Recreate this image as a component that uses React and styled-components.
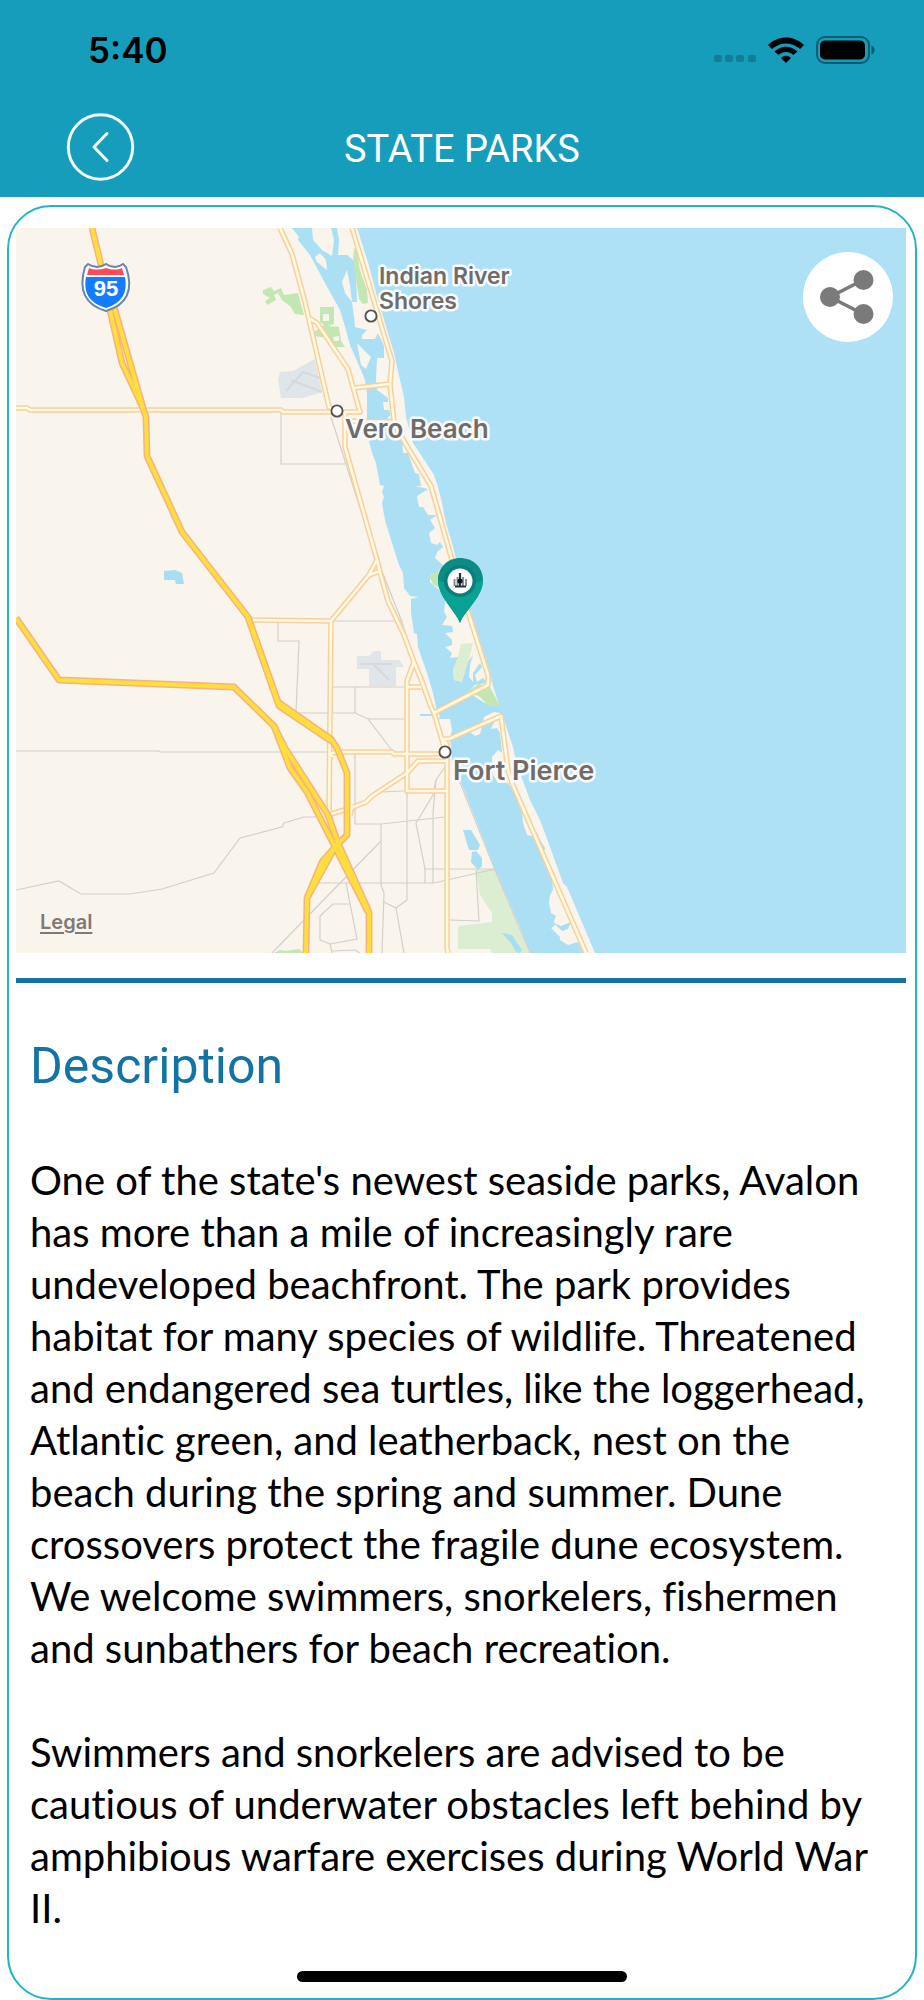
import React from 'react';
import styled, { createGlobalStyle } from 'styled-components';

const GlobalStyle = createGlobalStyle`
    * {
        box-sizing: border-box;
    }

    body {
        margin: 0;
        background: #fff;
        font-family: Inter, "Liberation Sans", sans-serif;
    }
`;

const Page = styled.div`
    min-height: 100vh;
    display: flex;
    flex-direction: column;
`;

const Header = styled.header`
    background: #159dbb;
    color: #fff;
    padding: 30px 48px 15px 66px;
`;

const StatusBar = styled.div`
    display: flex;
    align-items: center;
    justify-content: space-between;
    height: 40px;
    padding-left: 22px;
    color: #000;
`;

const Time = styled.time`
    font-size: 35px;
    font-weight: 600;
    line-height: 42px;
`;

const StatusIcons = styled.div`
    display: flex;
    align-items: center;
    gap: 12px;
`;

const NavBar = styled.nav`
    display: grid;
    grid-template-columns: 70px 1fr 70px;
    align-items: center;
    margin: 42px 18px 0 0;
`;

const BackButton = styled.button`
    display: flex;
    width: 70px;
    height: 70px;
    padding: 0;
    border: none;
    background: none;
    cursor: pointer;
`;

const Title = styled.h1`
    margin: 0;
    padding-top: 4px;
    text-align: center;
    font-family: Roboto, "Liberation Sans", sans-serif;
    font-size: 38px;
    font-weight: 400;
    line-height: 44px;
`;

const Card = styled.main`
    flex: 1;
    margin: 8px 7px 0;
    padding: 21px 9px 48px 7px;
    border: 2px solid #1fb6ca;
    border-radius: 44px;
`;

const MapFrame = styled.section`
    position: relative;
`;

const MapDrawing = styled.svg`
    display: block;
    width: 100%;
    height: auto;
`;

const PlaceLabel = styled.text`
    font-family: Inter, "Liberation Sans", sans-serif;
    font-size: ${props => props.$size}px;
    font-weight: 600;
    fill: #6f6c69;
    stroke: #f8fbfc;
    stroke-width: 5px;
    stroke-linejoin: round;
    paint-order: stroke;
`;

const ShareButton = styled.button`
    position: absolute;
    top: 24px;
    right: 13px;
    width: 90px;
    height: 90px;
    padding: 0;
    border: none;
    border-radius: 50%;
    background: #fff;
    cursor: pointer;
`;

const LegalLink = styled.a`
    position: absolute;
    left: 24px;
    bottom: 18px;
    color: #7d7a77;
    font-size: 20px;
    font-weight: 600;
    line-height: 26px;
    text-underline-offset: 3px;
`;

const Divider = styled.hr`
    height: 5px;
    margin: 25px 0 0;
    border: none;
    background: #1273a4;
`;

const Details = styled.section`
    padding: 53px 12px 0 14px;
`;

const SectionTitle = styled.h2`
    margin: 0;
    color: #1273a4;
    font-family: Roboto, "Liberation Sans", sans-serif;
    font-size: 50px;
    font-weight: 400;
    line-height: 60px;
`;

const Paragraph = styled.p`
    margin: 0 0 52px;
    color: #000;
    font-family: Lato, "Open Sans", sans-serif;
    font-size: 40px;
    line-height: 52px;
    font-variant-ligatures: none;

    ${SectionTitle} + & {
        margin-top: 58px;
    }

    &:last-child {
        margin-bottom: 0;
    }
`;

const HomeIndicator = styled.div`
    position: fixed;
    left: 50%;
    bottom: 18px;
    width: 330px;
    height: 11px;
    margin-left: -165px;
    border-radius: 6px;
    background: #000;
`;

const highways = [
    'M92 228 L101 265 L115 310 L143 408 L146 417 L147 456 L182 532 L248 617 L278 702 L331 739 L337 748 L347 773 V835 L335 847 L307 898 L306 953',
    'M106 285 L110 310 L122 363 L143 408',
    'M248 617 L279 706 L331 741',
    'M335 847 L322 862 L307 898',
    'M16 618 L59 680 L234 687 L274 726 L285 748 L328 815 L338 843 L369 912 V953',
    'M274 726 L290 768 L307 792 L335 847 L368 912',
];

const roads = [
    'M280 228 L292 254 L305 302 L329 407 L336 411 L345 413 L345 447 L377 560 L380 572 L388 601 L404 635 L414 662 L421 679 L431 707 L434 713 L445 750',
    'M309 318 L317 323 L348 369 L360 412 H336',
    'M354 388 L390 384',
    'M345 421 L393 422',
    'M352 228 L392 361 L390 384 L394 422 L405 443 L431 486 L456 574 L488 675 V685 L434 713',
    'M16 408 H27 L30 410 H281 L283 412 H338',
    'M248 620 L331 621 L369 575 L377 560',
    'M369 575 L380 571',
    'M331 621 L329 814',
    'M414 662 L407 681 V791 H447',
    'M407 687 H421',
    'M329 754 L337 752 H392 L394 754 H446',
    'M329 754 L334 757',
    'M331 814 L351 808 L366 802 L372 796 L407 773 L418 761 H446',
    'M350 816 L352 805',
    'M443 739 L447 745 V948 L448 953',
    'M443 739 L449 739 L501 716 L508 770 L512 783 L586 953',
    'M329 814 L331 820',
];

const streets = [
    'M281 412 V464 H345',
    'M331 417 L360 508 L380 566 L402 622 L418 676 L434 708',
    'M331 621 H403',
    'M278 622 V641 H299 L296 713 H355 L368 719 H405',
    'M331 687 H407 M355 687 V713 M368 719 L394 753',
    'M16 751 H159 L160 752 H329',
    'M16 890 L59 881 L81 894 H130 L162 889 L214 873 L240 838 L282 827 L284 823 L304 817 H327',
    'M355 754 V824 H381 L445 817',
    'M381 824 V885 L384 893 L382 953',
    'M272 953 L381 841',
    'M309 883 H434 L495 869 H424',
    'M346 883 L357 939 L330 944 L320 940 V916 L333 904 H351',
    'M330 944 L332 953 M332 951 L355 950 L360 953',
    'M407 791 V900 L396 908 L384 902 M396 908 L404 953',
    'M380 792 L404 791 M445 767 L436 780 L433 795 L416 823 L425 869 V883',
    'M436 780 L433 813 V883',
    'M476 870 L479 921 L449 920',
    'M459 780 L495 870 L530 953',
];

const places = [
    { name: ['Indian River', 'Shores'], size: 23, x: 379, y: 284, dotX: 371, dotY: 316 },
    { name: ['Vero Beach'], size: 26, x: 345, y: 438, dotX: 337, dotY: 411 },
    { name: ['Fort Pierce'], size: 27, x: 453, y: 780, dotX: 445, dotY: 752 },
];

const WifiIcon = () => (
    <svg width="36" height="27" viewBox="0 0 36 27" aria-label="Wi-Fi">
        <path d="M0 8 C10 -2 26 -2 36 8 L32 12 C24 4.500 12 4.500 4 12 Z" />
        <path d="M6.500 14.500 C13 8 23 8 29.500 14.500 L25.500 18 C21 14 15 14 10.500 18 Z" />
        <path d="M13 21 C16 18 20 18 23 21 L18 26 Z" />
    </svg>
);

const BatteryIcon = () => (
    <svg width="60" height="28" viewBox="0 0 60 28" aria-label="Battery full">
        <rect x="1" y="1" width="52" height="26" rx="8" fill="none" stroke="#0b5d70" strokeWidth="2" />
        <rect x="4" y="4.500" width="45" height="19" rx="5" />
        <path d="M55.500 9.500 C59.500 11 59.500 17 55.500 18.500 Z" fill="#0b5d70" />
    </svg>
);

const SignalIcon = () => (
    <svg width="42" height="26" viewBox="0 0 42 26" fill="#117e96" aria-label="No signal">
        {[0, 11, 22, 34].map(x => (
            <rect key={x} x={x} y="18" width="8" height="7" rx="2" />
        ))}
    </svg>
);

const BackIcon = () => (
    <svg width="70" height="70" viewBox="0 0 70 70" fill="none" stroke="#f4fbfd" strokeLinecap="round" strokeLinejoin="round">
        <circle cx="34.500" cy="35" r="32.200" strokeWidth="3" />
        <path d="M41 21.500 L28 35 L41 48.500" strokeWidth="3" />
    </svg>
);

const ShareIcon = () => (
    <svg width="90" height="90" viewBox="0 0 90 90" fill="#7a7a7a">
        <path d="M60 28 L27 45 L60 62" fill="none" stroke="#7a7a7a" strokeWidth="3.500" />
        <circle cx="27" cy="45" r="10" />
        <circle cx="60.500" cy="28" r="10" />
        <circle cx="60.500" cy="62" r="10" />
    </svg>
);

const Water = () => (
    <>
        <path
            fill="#aee1f5"
            d="M357 228 L368 262 L378 300 L394 353 L400 380 L404 397 L406 417 L413 443 L423 458 L434 475 L438 487
                L442 503 L446 523 L452 543 L458 566 L470 613 L477 633 L489 670 L492 683 L499 705 L490 708 L500 713 L504 720
                L513 747 L517 765 L530 800 L540 820 L550 847 L563 883 L567 887 L578 913 L595 953 H906 V228 Z"
        />
        <path
            fill="#aadff4"
            d="M292 228 L299 237 L298 240 L310 255 L325 283 L340 310 L346 330 L350 345 L358 363 L365 380 L367 393 V433
                L372 453 L376 463 L380 485 L384 486 L382 492 L384 497 L382 503 L385 520 L392 543 L399 565 L403 573 L404 588
                L410 596 L419 597 L411 599 L411 612 L414 633 L417 634 L418 647 L427 673 L433 693 L436 707 L440 717 L438 719
                L450 719 L452 730 L450 738 L452 760 L460 780 L472 810 L485 843 L495 870 L507 897 L520 927 L530 953
                H584 L578 942 L568 945 L560 940 V937 L551 928 L555 925 L554 921 L556 916 L551 913 L549 903 L550 895 L553 890
                L552 878 L547 863 L543 850 L537 832 L532 836 L527 835 L523 823 L522 812 L515 793 L508 783 L498 783
                L493 775 L492 757 L498 750 L502 753 L500 733 L497 728 L491 729 L496 718 L483 722 L484 717 L494 712
                L502 713 L499 705 L490 705 L483 702 L468 692 L475 685 L487 683 L483 678 L477 682 L475 675 L482 667
                L480 663 L473 673 V682 L469 677 L470 665 L473 655 L467 663 L462 682 L454 680 L453 670 L458 657
                L450 658 L452 653 L445 647 L452 645 V640 L445 633 L453 632 L452 626 L442 625 L447 617 L444 612
                L446 596 L430 582 V575 L438 572 L443 565 L435 558 L437 552 L443 547 L440 542 L437 545 L431 543
                L429 533 L435 528 L430 520 L437 515 H428 L423 507 H419 L417 496 L428 489 L415 486 L421 486 L419 474 L415 473
                L408 453 H403 L402 438 L393 422 H388 V417 L391 415 L389 410 H384 L383 402 H388 V398 L377 390 L376 380
                L377 358 L384 358 V346 L378 333 L375 339 L362 339 V335 L367 330 L355 327 L354 317 L352 302 H357
                L356 273 L353 260 L347 255 H338 L339 240 L337 228 H331 L334 240 L332 256 L322 250 L313 240 L312 228 Z"
        />
        <path
            fill="#f9f4ec"
            d="M320 253 L326 260 L327 270 L317 262 L315 257 Z M347 270 L350 285 L352 302 L345 293 L342 282 Z
                M357 343 L371 357 L366 369 L361 365 Z M470 732 L483 724 L480 734 L475 736 Z"
        />
        <path
            fill="#a8ddf2"
            d="M164 571 L175 570 L182 573 L184 584 H176 L175 580 H164 Z M463 830 H471 L480 845 L478 850 H469 Z
                M472 852 L476 851 L482 858 V866 L478 870 L471 862 Z M503 933 L513 936 L521 953 H516 L510 942 Z
                M420 714 H438 V716 H420 Z M537 835 L545 848 L544 852 L539 848 Z M554 923 L561 926 L571 922 L568 929 L562 931 Z"
        />
    </>
);

const Areas = () => (
    <>
        <path
            fill="#c3e7b2"
            d="M263 290 L271 287 L274 291 L281 288 L284 295 L298 293 L304 315 L295 314 L291 307 L286 303 L282 300 L278 293
                L274 295 L276 300 L267 305 L265 301 L270 298 L263 294 Z
                M320 307 H334 V324 L328 326 L339 327 L341 341 L345 347 H336 L329 344 L327 338 L315 336 L314 332 L324 325 L320 322 Z
                M354 248 L357 252 L360 270 L367 290 L368 303 L363 304 L359 299 L356 278 L353 260 Z
                M429 576 L438 571 L442 590 L433 584 Z M468 691 L479 684 L490 687 L500 706
                H489 L480 697 Z M274 953 L280 950 L285 951 L299 949 L304 953 Z"
        />
        <path fill="#f9f4ec" d="M323 314 H329 V321 H323 Z M333 337 L339 336 V341 L334 341 Z" />
        <path
            fill="#dbeed2"
            d="M461 644 L473 643 L469 659 L462 682 L454 680 L453 670 L458 657 Z M476 870 L495 870 L507 897
                L529 953 H491 V949 H458 V926 L492 922 V913 L480 895 Z"
        />
        <path fill="#a8ddf2" d="M502 933 L512 935 L522 950 L520 953 L516 952 L511 943 Z" />
        <path
            fill="#e0e5ea"
            d="M280 372 L293 371 L315 359 L322 392 L303 398 H281 L278 380 Z M357 656 H369 L374 651 H381 V660 H399
                L404 667 H396 V686 H369 V669 H357 Z"
        />
        <path
            fill="none"
            stroke="#d5dade"
            strokeWidth="2"
            d="M286 391 L303 372 L320 378 M291 380 L322 392 M361 664 H392 M374 665 L389 680"
        />
    </>
);

const InterstateShield = () => (
    <g>
        <path
            d="M88 264 C94 268 100 268 106 264 C112 268 118 268 123 264 L126 267 C134 290 127 305 106 311
                C85 305 78 290 85 267 Z"
            fill="#fff"
            stroke="#6883ae"
            strokeWidth="2"
        />
        <path d="M89 268 C94 270 100 270 106 268 C112 270 118 270 122 268 L124 275 H87 Z" fill="#fc4a59" />
        <path d="M86 277 H125 C128 294 121 303 106 308 C90 303 83 294 86 277 Z" fill="#147cff" />
        <text x="106" y="296" textAnchor="middle" fill="#fff" fontFamily="Liberation Sans, sans-serif" fontSize="22" fontWeight="700">
            95
        </text>
    </g>
);

const ParkPin = () => (
    <g>
        <path
            d="M460 623 C455 610 438 597 438 580 C438 567 448 558 460 558 C473 558 483 567 483 580
                C483 597 465 610 460 623 Z"
            fill="#0b8d85"
        />
        <path d="M460 590 L483 580 C483 597 465 610 460 623 C455 610 438 597 438 580 Z" fill="#08a193" />
        <circle cx="460" cy="581" r="16" fill="#087f79" />
        <circle cx="460" cy="581" r="12.500" fill="#fff" />
        <path d="M454.500 579 V586 M457.500 577 V587 M463 577 V587 M466 579 V586" stroke="#7b8488" strokeWidth="1.800" fill="none" />
        <path d="M460 573 V587 M455 586.500 H466" stroke="#263238" strokeWidth="2.200" fill="none" />
        <circle cx="460" cy="581" r="2.600" fill="#10181c" />
    </g>
);

const AreaMap = () => (
    <MapDrawing viewBox="16 228 890 725" role="img" aria-label="Map of the coast between Vero Beach and Fort Pierce">
        <rect x="16" y="228" width="890" height="725" fill="#f9f4ec" />
        <Water />
        <Areas />
        <g fill="none" stroke="#d3d0ca" strokeWidth="1.200">
            {streets.map(d => <path key={d} d={d} />)}
        </g>
        <g fill="none" strokeLinejoin="round">
            {roads.map(d => <path key={d} d={d} stroke="#f9cf9e" strokeWidth="5.600" />)}
            {roads.map(d => <path key={d} d={d} stroke="#fffae0" strokeWidth="2.600" />)}
            {highways.map(d => <path key={d} d={d} stroke="#f8b280" strokeWidth="6.800" />)}
            {highways.map(d => <path key={d} d={d} stroke="#ffdf3b" strokeWidth="3.800" />)}
        </g>
        <InterstateShield />
        {places.map(place => (
            <g key={place.name[0]}>
                <circle cx={place.dotX} cy={place.dotY} r="5.600" fill="#fff" stroke="#555250" strokeWidth="1.900" />
                {place.name.map((line, i) => (
                    <PlaceLabel key={line} $size={place.size} x={place.x} y={place.y + i * 25}>
                        {line}
                    </PlaceLabel>
                ))}
            </g>
        ))}
        <ParkPin />
    </MapDrawing>
);

const App = () => (
    <Page>
        <GlobalStyle />
        <Header>
            <StatusBar>
                <Time>5:40</Time>
                <StatusIcons>
                    <SignalIcon />
                    <WifiIcon />
                    <BatteryIcon />
                </StatusIcons>
            </StatusBar>
            <NavBar>
                <BackButton aria-label="Back">
                    <BackIcon />
                </BackButton>
                <Title>STATE PARKS</Title>
            </NavBar>
        </Header>
        <Card>
            <MapFrame>
                <AreaMap />
                <ShareButton aria-label="Share">
                    <ShareIcon />
                </ShareButton>
                <LegalLink href="#legal">Legal</LegalLink>
            </MapFrame>
            <Divider />
            <Details>
                <SectionTitle>Description</SectionTitle>
                <Paragraph>
                    One of the state's newest seaside parks, Avalon has more than a mile of increasingly rare
                    undeveloped beachfront. The park provides habitat for many species of wildlife. Threatened
                    and endangered sea turtles, like the loggerhead, Atlantic green, and leatherback, nest on the
                    beach during the spring and summer. Dune crossovers protect the fragile dune ecosystem.
                    We welcome swimmers, snorkelers, fishermen and sunbathers for beach recreation.
                </Paragraph>
                <Paragraph>
                    Swimmers and snorkelers are advised to be cautious of underwater obstacles left behind by
                    amphibious warfare exercises during World War II.
                </Paragraph>
            </Details>
        </Card>
        <HomeIndicator />
    </Page>
);

export default App;
